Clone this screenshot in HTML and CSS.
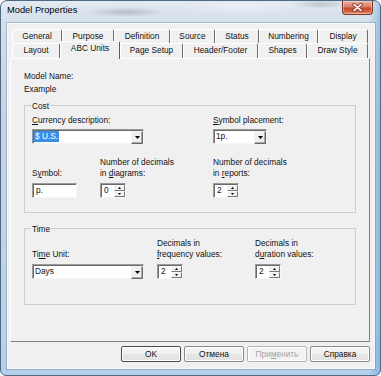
FILE: index.html
```html
<!DOCTYPE html>
<html>
<head>
<meta charset="utf-8">
<title>Model Properties</title>
<link rel="stylesheet" href="styles.css">
</head>
<body>
<div class="window">
  <div class="titlebar">
    <span class="title">Model Properties</span>
    <div class="close">
      <svg width="11" height="9" viewBox="0 0 11 9"><path d="M2 1.5 L9 7.5 M9 1.5 L2 7.5" stroke="#7a2a1c" stroke-width="3.4" stroke-linecap="round"/><path d="M2 1.5 L9 7.5 M9 1.5 L2 7.5" stroke="#fbeae6" stroke-width="1.8" stroke-linecap="round"/></svg>
    </div>
  </div>
  <div class="client">
    <div class="tabs">
      <div class="tabrow back">
        <div class="tab t-general">General</div>
        <div class="tab t-purpose">Purpose</div>
        <div class="tab t-definition">Definition</div>
        <div class="tab t-source">Source</div>
        <div class="tab t-status">Status</div>
        <div class="tab t-numbering">Numbering</div>
        <div class="tab t-display">Display</div>
      </div>
      <div class="tabrow front">
        <div class="tab t-layout">Layout</div>
        <div class="tab t-abc sel">ABC Units</div>
        <div class="tab t-page">Page Setup</div>
        <div class="tab t-header">Header/Footer</div>
        <div class="tab t-shapes">Shapes</div>
        <div class="tab t-draw">Draw Style</div>
      </div>
    </div>
    <div class="panel">
      <div class="line">Model Name:</div>
      <div class="line value">Example</div>

      <div class="group cost">
        <div class="ghead"><span class="glabel">Cost</span></div>
        <div class="gbody grid-cost">
          <div class="cell span2">
            <div class="line"><u>C</u>urrency description:</div>
            <div class="combo w112">
              <div class="cval"><span class="hl">$ U.S.</span></div>
              <div class="drop"><svg width="5" height="3" viewBox="0 0 5 3"><path d="M0 0H5L2.5 3Z" fill="#000"/></svg></div>
            </div>
          </div>
          <div class="cell">
            <div class="line"><u>S</u>ymbol placement:</div>
            <div class="combo w54">
              <div class="cval">1p.</div>
              <div class="drop"><svg width="5" height="3" viewBox="0 0 5 3"><path d="M0 0H5L2.5 3Z" fill="#000"/></svg></div>
            </div>
          </div>
          <div class="cell end">
            <div class="line">S<u>y</u>mbol:</div>
            <div class="edit w45">p.</div>
          </div>
          <div class="cell end">
            <div class="line">Number of decimals</div>
            <div class="line">in <u>d</u>iagrams:</div>
            <div class="spin">
              <div class="num">0</div>
              <div class="updown">
                <span class="ud"><svg width="3" height="2" viewBox="0 0 3 2"><path d="M0 2H3L1.5 0Z" fill="#000"/></svg></span>
                <span class="ud"><svg width="3" height="2" viewBox="0 0 3 2"><path d="M0 0H3L1.5 2Z" fill="#000"/></svg></span>
              </div>
            </div>
          </div>
          <div class="cell end">
            <div class="line">Number of decimals</div>
            <div class="line">in <u>r</u>eports:</div>
            <div class="spin">
              <div class="num">2</div>
              <div class="updown">
                <span class="ud"><svg width="3" height="2" viewBox="0 0 3 2"><path d="M0 2H3L1.5 0Z" fill="#000"/></svg></span>
                <span class="ud"><svg width="3" height="2" viewBox="0 0 3 2"><path d="M0 0H3L1.5 2Z" fill="#000"/></svg></span>
              </div>
            </div>
          </div>
        </div>
      </div>

      <div class="group time">
        <div class="ghead"><span class="glabel">Time</span></div>
        <div class="gbody grid-time">
          <div class="cell end">
            <div class="line">Ti<u>m</u>e Unit:</div>
            <div class="combo w112">
              <div class="cval">Days</div>
              <div class="drop"><svg width="5" height="3" viewBox="0 0 5 3"><path d="M0 0H5L2.5 3Z" fill="#000"/></svg></div>
            </div>
          </div>
          <div class="cell end">
            <div class="line">Decimals in</div>
            <div class="line"><u>f</u>requency values:</div>
            <div class="spin">
              <div class="num">2</div>
              <div class="updown">
                <span class="ud"><svg width="3" height="2" viewBox="0 0 3 2"><path d="M0 2H3L1.5 0Z" fill="#000"/></svg></span>
                <span class="ud"><svg width="3" height="2" viewBox="0 0 3 2"><path d="M0 0H3L1.5 2Z" fill="#000"/></svg></span>
              </div>
            </div>
          </div>
          <div class="cell end">
            <div class="line">Decimals in</div>
            <div class="line">d<u>u</u>ration values:</div>
            <div class="spin">
              <div class="num">2</div>
              <div class="updown">
                <span class="ud"><svg width="3" height="2" viewBox="0 0 3 2"><path d="M0 2H3L1.5 0Z" fill="#000"/></svg></span>
                <span class="ud"><svg width="3" height="2" viewBox="0 0 3 2"><path d="M0 0H3L1.5 2Z" fill="#000"/></svg></span>
              </div>
            </div>
          </div>
        </div>
      </div>
    </div>
    <div class="buttons">
      <div class="btn default">OK</div>
      <div class="btn">Отмена</div>
      <div class="btn disabled">При<u>м</u>енить</div>
      <div class="btn">Справка</div>
    </div>
  </div>
</div>
</body>
</html>
```

FILE: styles.css
```css
* { box-sizing: border-box; }
html, body { margin: 0; padding: 0; }
body {
  width: 381px;
  height: 376px;
  overflow: hidden;
  background: #ffffff;
  font-family: "Liberation Sans", Arial, sans-serif;
  font-size: 8.3px;
  color: #111;
}
u { text-decoration: underline; text-underline-offset: 1px; }

.window {
  width: 381px;
  height: 376px;
  border: 1px solid #4f6985;
  border-radius: 7px 7px 6px 6px;
  overflow: hidden;
  display: flex;
  flex-direction: column;
  background:
    linear-gradient(90deg, rgba(255,255,255,0) 368px, rgba(70,140,205,0.45) 381px),
    linear-gradient(180deg, #e2e9f1 0px, #d3dee9 24px, #c5d4e3 120px, #bed3e8 300px, #b3d0ec 376px);
}

.titlebar {
  height: 22px;
  flex: none;
  display: flex;
  align-items: flex-start;
  padding-left: 6px;
  background:
    radial-gradient(ellipse 40px 5px at 125px 11px, rgba(110,120,135,0.35), rgba(110,120,135,0)),
    radial-gradient(ellipse 30px 5px at 320px 3px, rgba(110,120,135,0.3), rgba(110,120,135,0)),
    radial-gradient(ellipse 60px 8px at 240px 6px, rgba(255,255,255,0.35), rgba(255,255,255,0));
}
.title {
  margin-top: 3px;
  font-size: 9.3px;
  line-height: 12px;
  color: #000;
}
.close {
  margin-left: auto;
  margin-right: 7px;
  width: 31px;
  height: 14px;
  border: 1px solid #7a3326;
  border-top: none;
  border-radius: 0 0 4px 4px;
  background: linear-gradient(180deg, #ecb4a4 0%, #d87e66 45%, #c7462b 55%, #d46a4c 85%, #e59a7f 100%);
  box-shadow: inset 0 0 0 1px rgba(255,255,255,0.35);
  display: flex;
  align-items: center;
  justify-content: center;
}

.client {
  flex: none;
  width: 368px;
  height: 346px;
  margin-left: 6px;
  background: #f0f0f0;
  border: 1px solid #f8fafc;
  box-shadow: 0 0 0 1px rgba(85,110,140,0.35);
  padding-top: 5px;
  display: flex;
  flex-direction: column;
}

.tabs { margin-left: 4px; width: 356px; }
.tabrow { display: flex; }
.tabrow.back { height: 14px; }
.tabrow.front { height: 15px; }
.tab {
  flex: none;
  height: 100%;
  text-align: center;
  line-height: 11px;
  padding-top: 1px;
  white-space: nowrap;
  border-top: 1px solid #ffffff;
  border-left: 1px solid #ffffff;
  border-right: 1px solid #6c6c6c;
  border-radius: 2px 2px 0 0;
}
.tab.sel {
  position: relative;
  z-index: 1;
  height: 18px;
  margin-top: -2px;
  background: #f0f0f0;
  border-right-color: #5c5c5c;
}
.t-general { width: 50px; }
.t-purpose { width: 52px; }
.t-definition { width: 56px; }
.t-source { width: 45px; }
.t-status { width: 44px; }
.t-numbering { width: 59px; }
.t-display { width: 50px; }
.t-layout { width: 48px; }
.t-abc { width: 60px; }
.t-page { width: 63px; }
.t-header { width: 75px; }
.t-shapes { width: 49px; }
.t-draw { width: 61px; }

.panel {
  margin-left: 2px;
  width: 360px;
  height: 284px;
  flex: none;
  border: 1px solid;
  border-color: #ffffff #808080 #808080 #ffffff;
  padding: 12px 13px 0 13px;
}
.line { line-height: 11px; white-space: nowrap; }
.value { margin-top: 2px; }

.group { width: 332px; }
.cost { margin-top: 6px; }
.time { margin-top: 11px; }
.ghead {
  display: flex;
  height: 11px;
}
.ghead::before {
  content: "";
  width: 6px;
  height: 6px;
  align-self: flex-end;
  border-top: 1px solid #c9cfd4;
  border-left: 1px solid #c9cfd4;
}
.ghead::after {
  content: "";
  flex: 1;
  height: 6px;
  align-self: flex-end;
  border-top: 1px solid #c9cfd4;
  border-right: 1px solid #c9cfd4;
}
.glabel { line-height: 11px; padding: 0 1px; }
.gbody {
  border: 1px solid #c9cfd4;
  border-top: none;
  display: grid;
}
.grid-cost {
  grid-template-columns: 68px 113px 1fr;
  row-gap: 13px;
  padding: 3px 7px 14px 7px;
}
.grid-time {
  grid-template-columns: 125px 98px 1fr;
  padding: 3px 7px 25px 7px;
}
.cell { display: flex; flex-direction: column; }
.cell.end { justify-content: flex-end; }
.span2 { grid-column: 1 / span 2; }

.combo, .edit, .spin {
  background: #ffffff;
  border: 1px solid;
  border-color: #9a9a9a #f6f6f6 #f6f6f6 #9a9a9a;
  box-shadow: inset 1px 1px 0 #6a6a6a;
}
.combo {
  height: 15px;
  display: flex;
}
.line + .combo, .line + .edit, .line + .spin { margin-top: 4px; }
.cell:not(.end) .line + .combo { margin-top: 3px; }
.w112 { width: 112px; }
.w54 { width: 54px; }
.w45 { width: 45px; }
.cval {
  flex: 1;
  padding: 1px 0 0 2px;
  line-height: 11px;
  white-space: nowrap;
}
.hl {
  display: inline-block;
  background: #3a8ee6;
  color: #ffffff;
  padding: 0 1px;
  margin-left: -1px;
}
.drop {
  width: 12px;
  margin-top: 1px;
  height: 13px;
  background: #f0f0f0;
  border: 1px solid;
  border-color: #f4f4f4 #6a6a6a #6a6a6a #f4f4f4;
  box-shadow: inset -1px -1px 0 #a8a8a8;
  display: flex;
  align-items: center;
  justify-content: center;
}
.edit {
  height: 15px;
  padding: 1px 0 0 3px;
  line-height: 11px;
}
.spin {
  width: 26px;
  height: 15px;
  display: flex;
}
.num { flex: 1; padding: 1px 0 0 3px; line-height: 11px; }
.updown {
  width: 11px;
  margin-top: 1px;
  display: flex;
  flex-direction: column;
}
.ud {
  flex: 1;
  background: #f0f0f0;
  border: 1px solid;
  border-color: #f8f8f8 #7a7a7a #7a7a7a #f8f8f8;
  display: flex;
  align-items: center;
  justify-content: center;
}

.buttons {
  margin-top: 4px;
  padding-right: 4px;
  display: flex;
  justify-content: flex-end;
  gap: 3px;
}
.btn {
  width: 60px;
  height: 16px;
  line-height: 14px;
  text-align: center;
  border: 1px solid #8a8a8a;
  border-radius: 2px;
  background: linear-gradient(180deg, #f6f6f6 0%, #efefef 50%, #e6e6e6 51%, #e2e2e2 100%);
  box-shadow: inset 0 0 0 1px #ffffff;
}
.btn.default { border-color: #4a4a4a; }
.btn.disabled {
  color: #a3a3a3;
  border-color: #b2b6b9;
  background: #f3f3f3;
}
```
